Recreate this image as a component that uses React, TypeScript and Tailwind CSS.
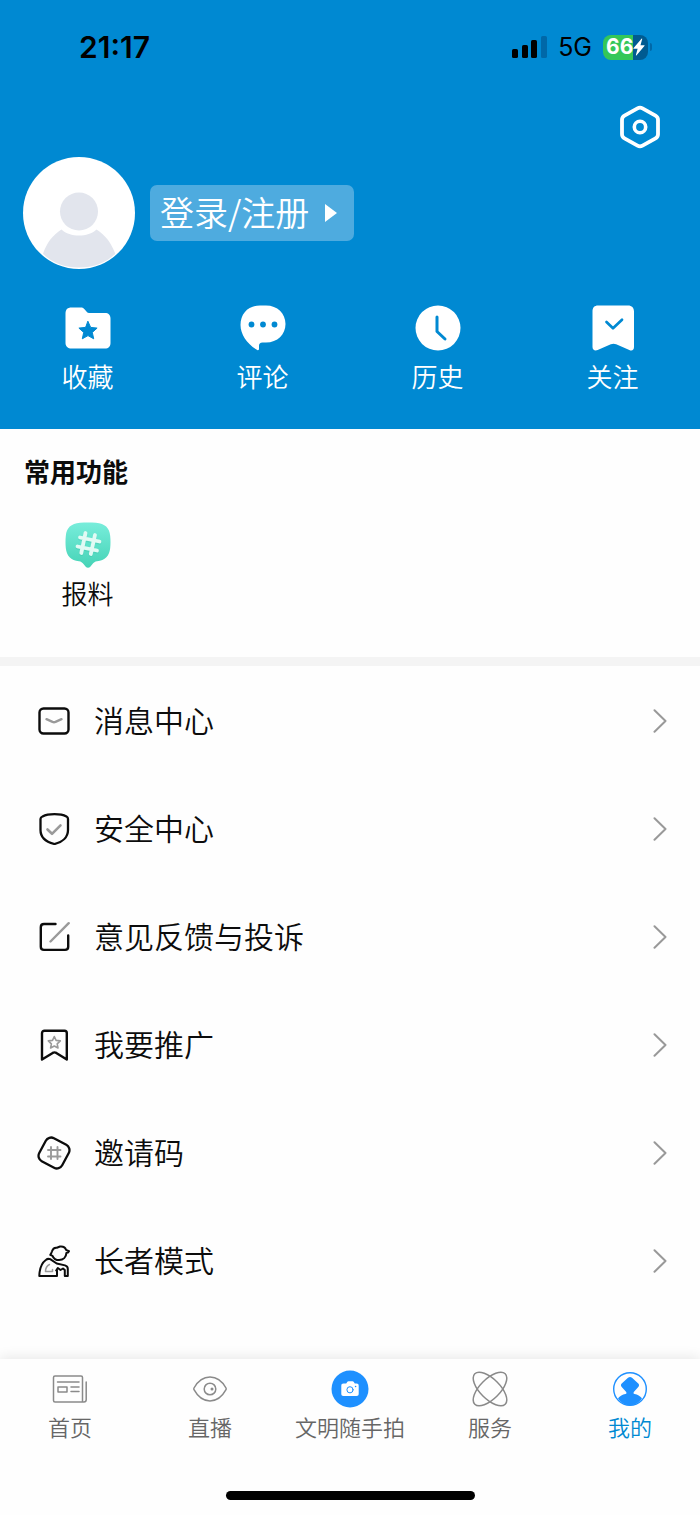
import type { ReactNode } from "react";

type IconProps = { w: number; h: number; children: ReactNode };

function Icon({ w, h, children }: IconProps) {
  return (
    <svg
      width={w}
      height={h}
      viewBox={`0 0 ${w} ${h}`}
      fill="none"
      strokeLinecap="round"
      strokeLinejoin="round"
      className="shrink-0"
      aria-hidden="true"
    >
      {children}
    </svg>
  );
}

function StatusBar() {
  return (
    <div className="flex h-[94px] items-center justify-between pl-[79px] pr-[48px] text-black">
      <time className="font-[Inter] text-[30px] font-semibold leading-8">21:17</time>
      <div className="flex items-center">
        <Icon w={35} h={22}>
          <rect x="0" y="13" width="6" height="9" rx="1.6" fill="#000" />
          <rect x="10" y="9" width="6" height="13" rx="1.6" fill="#000" />
          <rect x="19" y="4" width="6" height="18" rx="1.6" fill="#000" />
          <rect x="29" y="0" width="6" height="22" rx="1.6" fill="#0068a8" />
        </Icon>
        <span className="ml-[11px] font-[Inter] text-[25px] font-normal leading-8">5G</span>
        <div className="ml-[11px] flex items-center">
          <div className="flex h-[25px] w-[45px] items-center overflow-hidden rounded-[8px] bg-[linear-gradient(90deg,#34c759_67%,#005b91_67%)] pl-[3px]">
            <span className="font-[Inter] text-[21px] font-bold leading-6 text-white">66</span>
            <svg width="12" height="18" viewBox="0 0 12 18" className="shrink-0" aria-hidden="true">
              <path d="M8.5 0.8L0.6 9.9c-.4.5-.2.9.3.9h3.700L2.900 17c-.1.600.3.700.7.200l7.800-9.100c.4-.5.2-.9-.3-.9H7.500L9.200 1.100c.2-.6-.3-.8-.7-.3z" fill="#fff" />
            </svg>
          </div>
          <div className="ml-[2px] h-2 w-[2px] rounded-r-full bg-[#0068a8]" />
        </div>
      </div>
    </div>
  );
}

const quickActions = [
  {
    label: "收藏",
    icon: (
      <Icon w={46} h={46}>
        <path d="M6.500 2.500H16c1.600 0 2.500.600 3.500 1.700l2.200 2.500c.9 1 1.800 1.300 3 1.300H40c3.500 0 5.500 2 5.500 5.500v24.500c0 3.500-2 5.500-5.500 5.500H6.500C3 43.500.5 41.500.5 38V8.500c0-4 2-6 6-6z" fill="#fff" />
        <path d="M23 16.500l2.700 5.900 6.400.700-4.800 4.300 1.400 6.400-5.700-3.200-5.700 3.200 1.400-6.400-4.800-4.300 6.400-.7z" fill="#0089d2" stroke="#0089d2" />
      </Icon>
    ),
  },
  {
    label: "评论",
    icon: (
      <Icon w={46} h={46}>
        <path d="M20 .5h6C37.500.5 45.500 8.500 45.500 19S37.500 37.500 26 37.500h-3.500c-2.500 0-3.500 1.200-3.500 3.500v3c0 1-.8 1.500-1.700 1C7.500 39.500.5 29.500.5 20 .5 8.500 8.500.5 20 .5z" fill="#fff" />
        <circle cx="11.500" cy="19.500" r="2.900" fill="#0089d2" />
        <circle cx="23" cy="19.500" r="2.900" fill="#0089d2" />
        <circle cx="34.500" cy="19.500" r="2.900" fill="#0089d2" />
      </Icon>
    ),
  },
  {
    label: "历史",
    icon: (
      <Icon w={46} h={46}>
        <circle cx="23" cy="23" r="22.500" fill="#fff" />
        <path d="M22 12v14.500l8 7.500" stroke="#0089d2" strokeWidth="3" />
      </Icon>
    ),
  },
  {
    label: "关注",
    icon: (
      <Icon w={46} h={46}>
        <path d="M8 .5h30c3.800 0 6 2.200 6 6V42c0 3-2 4.300-4.700 3L26.200 39.300c-2-.8-3.400-.8-5.400 0L7.700 45C5 46.200 2.500 45 2.500 42V6.500c0-4 2-6 5.500-6z" fill="#fff" />
        <path d="M16.500 17l6.500 6.300 9-8.600" stroke="#0089d2" strokeWidth="2.700" />
      </Icon>
    ),
  },
];

const INK = "#0c0c0c";
const SOFT = "#9a9a9a";

const menu = [
  {
    label: "消息中心",
    icon: (
      <Icon w={32} h={32}>
        <rect x="1.500" y="3.500" width="29" height="25" rx="4" stroke={INK} strokeWidth="2.400" />
        <path d="M8.500 14.200l6 2.700c1 .4 2 .4 3 0l6-2.700" stroke={SOFT} strokeWidth="2.400" />
      </Icon>
    ),
  },
  {
    label: "安全中心",
    icon: (
      <Icon w={32} h={32}>
        <path d="M4.500 3.500C8 1.700 12 1.200 16.500 1.200s8.500.5 12 2.300c1 .5 1.500 1.300 1.500 2.400v11c0 7.100-5.500 12.100-13.500 14.100C8 29 2.500 24 2.500 17V5.900c0-1.100.8-1.900 2-2.400z" stroke={INK} strokeWidth="2.300" />
        <path d="M9.500 16.500l4.500 4.300 8.500-8.500" stroke={SOFT} strokeWidth="2.600" />
      </Icon>
    ),
  },
  {
    label: "意见反馈与投诉",
    icon: (
      <Icon w={32} h={32}>
        <path d="M17.500 3H6C3.800 3 2.800 4 2.800 6.200v19.500c0 2.200 1 3.200 3.200 3.200h21c2.200 0 3.200-1 3.200-3.200V14.500" stroke={INK} strokeWidth="2.400" />
        <path d="M12.500 20.500L30.700 2.200" stroke={SOFT} strokeWidth="2.400" />
      </Icon>
    ),
  },
  {
    label: "我要推广",
    icon: (
      <Icon w={32} h={32}>
        <path d="M6.500 1.700h20c1.500 0 2.300.8 2.300 2.300v26.600l-10.500-6.700c-1.400-.8-2.200-.8-3.600 0L4 30.600V4c0-1.500 1-2.300 2.500-2.300z" stroke={INK} strokeWidth="2.400" />
        <path d="M16.300 7.500l1.800 3.900 4.200.5-3.100 2.900.8 4.200-3.700-2-3.700 2 .8-4.200-3.100-2.900 4.200-.5z" stroke={SOFT} strokeWidth="1.600" />
      </Icon>
    ),
  },
  {
    label: "邀请码",
    icon: (
      <Icon w={34} h={34}>
        <rect x="4" y="4" width="26" height="26" rx="6" transform="rotate(28 17 17)" stroke={INK} strokeWidth="2.300" />
        <path d="M14 11v12M20.500 11v12M11 14h12.500M11 20.500h12.500" stroke={SOFT} strokeWidth="1.900" />
      </Icon>
    ),
  },
  {
    label: "长者模式",
    icon: (
      <Icon w={32} h={32}>
        <path d="M12.300 9.800c1-1 1.300-2.300 1.700-3.500.8-2.600 2.600-3.900 4.800-3.600L22 1.500c3-.3 5.300.8 6 3.300l3 1.300c-.4 1.200-1.400 1.600-2.600 1.800-.2 4.300-3.200 7.200-7.300 7.200-3.300 0-5.600-1.700-6.600-4.300z" stroke={INK} strokeWidth="2" />
        <path d="M1.300 31C1.500 23.500 4 17.800 7.800 15c1.200-1 2.700-1.500 4.400-.8l6.500 4.300 8.300 1.900c2 .6 2.800 1.700 2.800 3.400V31h-3v-6l-1.800-1.500-2.500 1.500-2.700-2-1.600 2.500H19V31z" stroke={INK} strokeWidth="2" />
        <path d="M11.500 19.500c-2.800 1.300-4 3.700-4 7h7v-2" stroke={SOFT} strokeWidth="1.500" />
      </Icon>
    ),
  },
];

const LINE = "#8a8a8a";
const ACTIVE = "#1e90ff";

const tabs = [
  {
    label: "首页",
    active: false,
    icon: (
      <Icon w={38} h={38}>
        <path d="M31.500 32V7.500c0-1-.5-1.500-1.500-1.500H4C3 6 2.500 6.500 2.500 7.500v23c0 1 .5 1.500 1.500 1.500h29c1.500 0 2.200-.7 2.200-2.200V12" stroke={LINE} strokeWidth="1.500" />
        <path d="M6.500 12H28M20 17h8M20 21.500h8" stroke={LINE} strokeWidth="1.500" />
        <rect x="7" y="17" width="9" height="5" stroke={LINE} strokeWidth="1.500" />
      </Icon>
    ),
  },
  {
    label: "直播",
    active: false,
    icon: (
      <Icon w={38} h={38}>
        <path d="M3 18c4-7.200 9.500-11 16-11s12 3.800 16 11c.3.600.3 1.200 0 1.700C31 27 25.500 31 19 31S7 27 3 19.700c-.3-.5-.3-1.100 0-1.700z" stroke={LINE} strokeWidth="1.500" />
        <circle cx="19" cy="19" r="5.800" stroke={LINE} strokeWidth="1.500" />
        <circle cx="21" cy="19" r="1.500" fill={LINE} />
      </Icon>
    ),
  },
  {
    label: "文明随手拍",
    active: false,
    icon: (
      <Icon w={38} h={38}>
        <circle cx="19" cy="19" r="18.500" fill={ACTIVE} />
        <path d="M12.500 13.500h2.700l1-1.500c.3-.5.7-.7 1.300-.7h4c.6 0 1 .2 1.300.7l1 1.500h1.700c1.500 0 2.200.7 2.200 2.200v8.100c0 1.500-.7 2.200-2.200 2.200h-13c-1.500 0-2.200-.7-2.200-2.200v-8.100c0-1.500.7-2.200 2.200-2.200z" fill="#fff" />
        <circle cx="19" cy="19.800" r="3.100" stroke={ACTIVE} strokeWidth="1" />
        <circle cx="24.600" cy="16.500" r=".8" fill={ACTIVE} />
      </Icon>
    ),
  },
  {
    label: "服务",
    active: false,
    icon: (
      <Icon w={38} h={38}>
        <ellipse cx="19" cy="19" rx="21.500" ry="10" transform="rotate(45 19 19)" stroke={LINE} strokeWidth="1.500" />
        <ellipse cx="19" cy="19" rx="21.500" ry="10" transform="rotate(-45 19 19)" stroke={LINE} strokeWidth="1.500" />
      </Icon>
    ),
  },
  {
    label: "我的",
    active: true,
    icon: (
      <Icon w={38} h={38}>
        <circle cx="19" cy="19" r="16.300" stroke={ACTIVE} strokeWidth="1.400" />
        <path d="M17 7.800c1.500-1 2.500-1 4 0l6 5.400c1.200 1.100 1.400 2.200.5 3.500l-4.500 5c-.8 1-.6 2 .6 2.300 3 .5 5.400 1.800 7.400 4.300C28 33 23.700 35.300 19 35.300S10 33 7 28.300c2-2.500 4.400-3.800 7.400-4.300 1.200-.3 1.400-1.300.6-2.300l-4.500-5c-.9-1.300-.7-2.400.5-3.500z" fill={ACTIVE} />
      </Icon>
    ),
  },
];

export default function App() {
  return (
    <div className="flex min-h-screen flex-col bg-[#fefefe] font-['Noto_Sans_CJK_SC',sans-serif] font-[350] text-[#0c0c0c]">
      <header className="bg-[#0089d2] pb-[35px] text-white">
        <StatusBar />
        <div className="flex justify-end px-10 pt-[11px]">
          <button type="button" aria-label="设置">
            <Icon w={40} h={44}>
              <path d="M17.500 3.300c1.800-1 3.200-1 5 0l13 7.300c1.700 1 2.500 2.300 2.500 4.200v14.400c0 1.900-.8 3.200-2.500 4.200l-13 7.300c-1.800 1-3.200 1-5 0l-13-7.300C2.800 32.400 2 31.100 2 29.200V14.800c0-1.900.8-3.200 2.500-4.200z" stroke="#fff" strokeWidth="3.800" />
              <circle cx="20" cy="22" r="5.700" stroke="#fff" strokeWidth="3.600" />
            </Icon>
          </button>
        </div>
        <div className="mt-2 flex items-center gap-[15px] px-[23px]">
          <Icon w={112} h={112}>
            <circle cx="56" cy="56" r="56" fill="#fff" />
            <circle cx="56" cy="54.500" r="19" fill="#e2e5ed" />
            <path d="M38.500 72.500C47 80.500 65 80.500 73.500 72.500c9 5.500 15 14 18.800 24.200C83 106 70 110.500 56 110.500S29 106 20 96.700C23.500 86.500 29.500 78 38.500 72.500z" fill="#e2e5ed" />
          </Icon>
          <button type="button" className="flex h-14 items-center gap-4 rounded-[7px] bg-[#4eabdf] pl-[10px] pr-[17px] text-[34px] leading-[50px]">
            <span className="pb-[2px]">登录/注册</span>
            <Icon w={12} h={18}>
              <path d="M0 0l12 9-12 9z" fill="#fff" />
            </Icon>
          </button>
        </div>
        <nav className="mt-9 grid grid-cols-4" aria-label="个人内容">
          {quickActions.map((a) => (
            <a key={a.label} href="#" className="flex flex-col items-center gap-[7px] text-[26px] leading-9">
              {a.icon}
              {a.label}
            </a>
          ))}
        </nav>
      </header>

      <section className="border-b-9 border-[#f4f4f4] pb-[46px] pt-6">
        <h2 className="px-6 text-[26px] font-bold leading-9">常用功能</h2>
        <div className="mt-[33px] grid grid-cols-4">
          <a href="#" className="flex flex-col items-center gap-[7px] text-[26px] leading-9">
            <svg width="46" height="46" viewBox="0 0 46 46" fill="none" strokeLinecap="round" aria-hidden="true">
              <defs>
                <linearGradient id="tip" x1="0" y1="0" x2="0" y2="1">
                  <stop offset="0" stopColor="#78eddb" />
                  <stop offset="1" stopColor="#45d3b6" />
                </linearGradient>
              </defs>
              <path d="M15 .8c5-.5 11-.5 16 0C40 1.500 44.500 6 45.200 14c.4 4 .4 8 0 12-.8 8-5 12.500-13.200 13.300-2 .3-3.300 1.200-4.500 2.700l-2 2.600c-1.500 1.600-3.500 1.600-5 0l-2-2.600c-1.200-1.500-2.500-2.400-4.500-2.700C5.800 38.500 1.600 34 .8 26c-.4-4-.4-8 0-12C1.500 6 6 1.500 15 .8z" fill="url(#tip)" />
              <path d="M20.500 12l-4.200 20M30 14l-4.200 19M15 16.500l19.500 4M12.500 25.500L32 29.500" stroke="#36bfa5" strokeOpacity=".35" strokeWidth="4" />
              <path d="M20.500 11l-4.200 20M30 13l-4.200 19M15 15.500l19.500 4M12.500 24.500L32 28.500" stroke="#e1faf4" strokeWidth="3.800" />
            </svg>
            报料
          </a>
        </div>
      </section>

      <ul className="pt-px">
        {menu.map((m) => (
          <li key={m.label}>
            <a href="#" className="flex h-[108px] items-center pl-[38px] pr-[33px] text-[30px] leading-[44px]">
              <span className="flex w-8 shrink-0 justify-center">{m.icon}</span>
              <span className="ml-6 flex-1 pb-1">{m.label}</span>
              <Icon w={14} h={24}>
                <path d="M1.500 1.200L12.500 12 1.500 22.800" stroke="#999" strokeWidth="2" />
              </Icon>
            </a>
          </li>
        ))}
      </ul>

      <footer className="mt-auto bg-[#fefefe] pb-[15px] shadow-[0_-2px_12px_rgba(0,0,0,0.09)]">
        <nav className="grid grid-cols-5 pt-[11px]" aria-label="主导航">
          {tabs.map((t) => (
            <a
              key={t.label}
              href="#"
              aria-current={t.active ? "page" : undefined}
              className={`flex flex-col items-center gap-0.5 whitespace-nowrap text-[22px] leading-8 ${t.active ? "text-[#0089d2]" : "text-[#666666]"}`}
            >
              {t.icon}
              {t.label}
            </a>
          ))}
        </nav>
        <div className="mx-auto mt-[49px] h-[9px] w-[249px] rounded-full bg-black" />
      </footer>
    </div>
  );
}
